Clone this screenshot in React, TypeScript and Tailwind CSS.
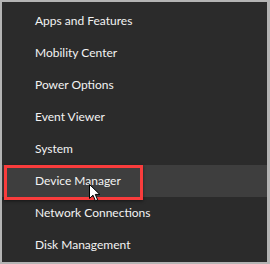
const ITEMS = [
  'Apps and Features',
  'Mobility Center',
  'Power Options',
  'Event Viewer',
  'System',
  'Device Manager',
  'Network Connections',
  'Disk Management',
]

export default function App() {
  return (
    <div className="relative h-[264px] w-[270px] overflow-hidden border-t-2 border-b-2 border-l-2 border-r-[3px] border-[#b4b4b4] bg-[#2b2b2b] pt-[3px] font-['Lato',sans-serif] text-[12px] text-[#f3f3f3]">
      {ITEMS.map((item) => (
        <div
          key={item}
          className={`flex h-[32px] items-center pl-[33px] ${item === 'Device Manager' ? 'bg-[#3e3e3e]' : ''}`}
        >
          {item}
        </div>
      ))}
      <div className="pointer-events-none absolute left-[2px] top-[163px] h-[35px] w-[139px] border-[3px] border-[#f93c3c] shadow-[0_1px_3px_rgba(0,0,0,0.5)]" />
      <svg className="absolute left-[87px] top-[182px]" width="12" height="18" viewBox="0 0 12 18">
        <path d="M0.5 0.5 L0.5 14.5 L4 11.2 L6.4 16.8 L8.6 15.8 L6.3 10.4 L10.8 10.4 Z" fill="#fff" stroke="#000" strokeWidth="1" strokeLinejoin="round" />
      </svg>
    </div>
  )
}
